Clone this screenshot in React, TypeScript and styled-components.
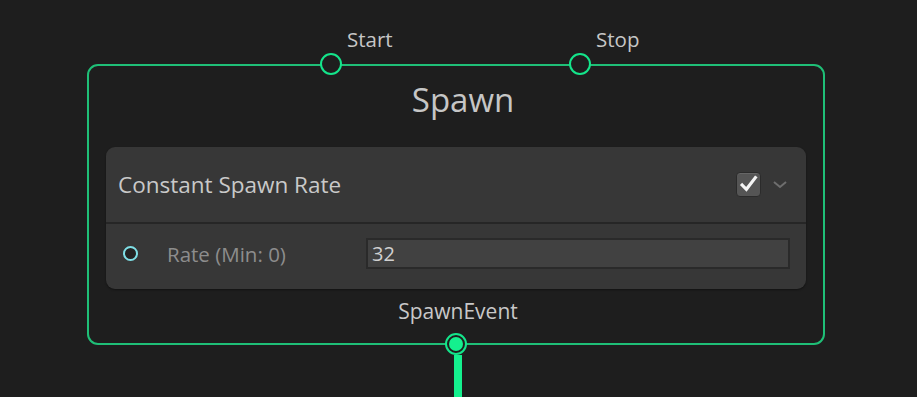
import styled, { createGlobalStyle } from "styled-components";

const GlobalStyle = createGlobalStyle`
  html, body {
    margin: 0;
    padding: 0;
    background-color: #1e1e1e;
    font-family: "Open Sans", "Noto Sans", sans-serif;
    overflow: hidden;
  }
`;

const Canvas = styled.div`
  width: 917px;
  height: 397px;
  padding: 64px 0 0 87px;
  box-sizing: border-box;
`;

const Node = styled.div`
  position: relative;
  width: 738px;
  height: 281px;
  box-sizing: border-box;
  border: 2px solid #1fbf77;
  border-radius: 11px;
  padding: 14px 17px 0;
  display: flex;
  flex-direction: column;
`;

const Title = styled.div`
  font-size: 33px;
  line-height: 40px;
  color: #c6c6c6;
  text-align: center;
  padding-left: 14px;
`;

const Card = styled.div`
  margin-top: 27px;
  height: 142px;
  background-color: #373737;
  border-radius: 9px;
  display: flex;
  flex-direction: column;
  box-shadow: 0 1px 2px rgba(0, 0, 0, 0.4);
`;

const CardHeader = styled.div`
  height: 75px;
  display: flex;
  align-items: center;
  padding: 0 18px 0 12px;
  border-bottom: 2px solid #262626;
  font-size: 22.5px;
  color: #c9c9c9;
`;

const HeaderTitle = styled.div`
  margin-right: auto;
`;

const CheckBox = styled.div`
  width: 25px;
  height: 25px;
  box-sizing: border-box;
  border-radius: 4px;
  background: #555555;
  border: 1px solid #2b2b2b;
  box-shadow: inset 0 1px 0 #666666;
  display: flex;
  align-items: center;
  justify-content: center;
`;

const Chevron = styled.div`
  margin-left: 11px;
  display: flex;
  align-items: center;
`;

const CardBody = styled.div`
  flex: 1;
  display: flex;
  align-items: center;
  padding: 0 16px 6px 17px;
`;

const InPort = styled.div<{ color: string }>`
  width: 15px;
  height: 15px;
  box-sizing: border-box;
  border-radius: 50%;
  border: 2px solid ${(p) => p.color};
  background: #232323;
`;

const FieldLabel = styled.div`
  margin-left: 29px;
  width: 199px;
  font-size: 20.5px;
  color: #8d8d8d;
`;

const Field = styled.div`
  flex: 1;
  height: 31px;
  box-sizing: border-box;
  border: 2px solid #2a2a2a;
  background: #414141;
  display: flex;
  align-items: center;
  padding-left: 4px;
  font-size: 20px;
  color: #d0d0d0;
`;

const Footer = styled.div`
  margin-top: 9px;
  font-size: 21px;
  line-height: 26px;
  color: #c8c8c8;
  text-align: center;
  padding-left: 4px;
`;

const FlowPort = styled.div<{ left: number }>`
  position: absolute;
  top: -13px;
  left: ${(p) => p.left}px;
  width: 22px;
  height: 22px;
  box-sizing: border-box;
  border-radius: 50%;
  border: 2.5px solid #14e58b;
  background: #1e1e1e;
`;

const PortLabel = styled.div`
  position: absolute;
  left: 25px;
  bottom: 20px;
  font-size: 20.5px;
  color: #c6c6c6;
  white-space: nowrap;
`;

const OutPort = styled.div`
  position: absolute;
  left: 50%;
  bottom: -12px;
  margin-left: -11px;
  width: 22px;
  height: 22px;
  box-sizing: border-box;
  border-radius: 50%;
  border: 2px solid #14e58b;
  background: #1e1e1e;
  padding: 2px;
`;

const OutDot = styled.div`
  width: 100%;
  height: 100%;
  border-radius: 50%;
  background: #14f08e;
`;

const Wire = styled.div`
  position: absolute;
  left: 7px;
  top: 20px;
  width: 8px;
  height: 60px;
  background: #14f08e;
`;

export default function App() {
  return (
    <>
      <GlobalStyle />
      <Canvas>
        <Node>
          <FlowPort left={231}>
            <PortLabel>Start</PortLabel>
          </FlowPort>
          <FlowPort left={480}>
            <PortLabel>Stop</PortLabel>
          </FlowPort>
          <Title>Spawn</Title>
          <Card>
            <CardHeader>
              <HeaderTitle>Constant Spawn Rate</HeaderTitle>
              <CheckBox>
                <svg width="19" height="19" viewBox="0 0 18 18">
                  <path
                    d="M3 9.5l4 4L15.5 2.5"
                    fill="none"
                    stroke="#f4f4f4"
                    strokeWidth={3}
                    strokeLinecap="square"
                  />
                </svg>
              </CheckBox>
              <Chevron>
                <svg width="16" height="10" viewBox="0 0 16 10">
                  <path
                    d="M2 2l6 5 6-5"
                    fill="none"
                    stroke="#6e6e6e"
                    strokeWidth={2}
                  />
                </svg>
              </Chevron>
            </CardHeader>
            <CardBody>
              <InPort color="#7fdfe6" />
              <FieldLabel>Rate (Min: 0)</FieldLabel>
              <Field>32</Field>
            </CardBody>
          </Card>
          <Footer>SpawnEvent</Footer>
          <OutPort>
            <OutDot />
            <Wire />
          </OutPort>
        </Node>
      </Canvas>
    </>
  );
}
